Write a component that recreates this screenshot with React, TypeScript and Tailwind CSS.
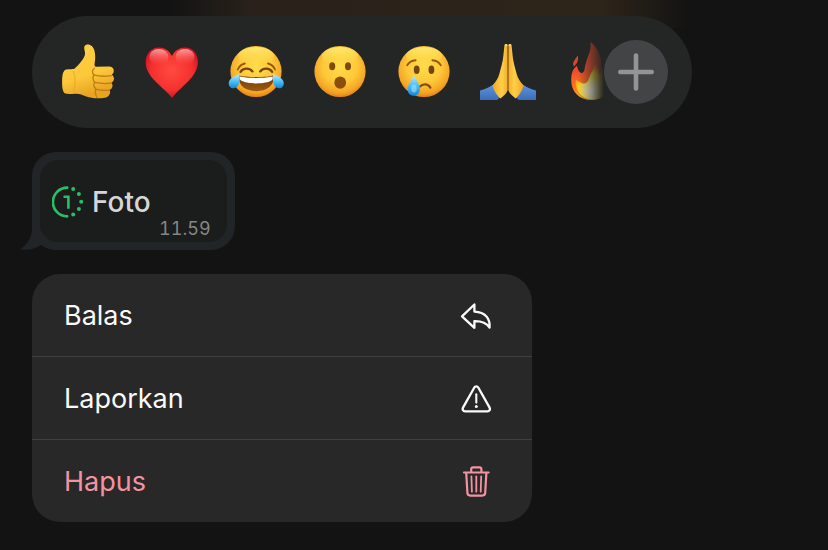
import type { ReactNode } from "react";

type IconProps = { className?: string };

// Gradients shared by every emoji, rendered once at the top of the page.
function EmojiDefs() {
  return (
    <svg className="absolute size-0" aria-hidden="true">
      <defs>
        <radialGradient id="face" cx="0.5" cy="0.4" r="0.61">
          <stop offset="0" stopColor="#ffdc4a" />
          <stop offset="0.55" stopColor="#fdc83a" />
          <stop offset="0.85" stopColor="#f6a423" />
          <stop offset="1" stopColor="#dc7d17" />
        </radialGradient>
        <linearGradient id="shine" x1="0" y1="0" x2="0" y2="1">
          <stop offset="0" stopColor="#fff27a" stopOpacity="0.8" />
          <stop offset="1" stopColor="#ffe04f" stopOpacity="0" />
        </linearGradient>
        <linearGradient id="thumb" x1="0" y1="0" x2="0.3" y2="1">
          <stop offset="0" stopColor="#ffd044" />
          <stop offset="0.65" stopColor="#fcc83a" />
          <stop offset="1" stopColor="#e8a322" />
        </linearGradient>
        <radialGradient id="heart" cx="0.5" cy="0.45" r="0.6">
          <stop offset="0" stopColor="#ff4b40" />
          <stop offset="0.65" stopColor="#f5302f" />
          <stop offset="1" stopColor="#c50d20" />
        </radialGradient>
        <linearGradient id="heartShine" x1="0" y1="0" x2="0" y2="1">
          <stop offset="0" stopColor="#ffc4c4" stopOpacity="0.8" />
          <stop offset="1" stopColor="#ff5a55" stopOpacity="0" />
        </linearGradient>
        <linearGradient id="tear" x1="0" y1="0" x2="0" y2="1">
          <stop offset="0" stopColor="#b9ecff" />
          <stop offset="0.5" stopColor="#4fc0f7" />
          <stop offset="1" stopColor="#1784d6" />
        </linearGradient>
        <linearGradient id="mouth" x1="0" y1="0" x2="0" y2="1">
          <stop offset="0" stopColor="#6b3a06" />
          <stop offset="1" stopColor="#9a5c10" />
        </linearGradient>
        <linearGradient id="palm" x1="0" y1="0" x2="1" y2="0">
          <stop offset="0" stopColor="#f5a61f" />
          <stop offset="0.6" stopColor="#ffcf48" />
          <stop offset="1" stopColor="#f0ac2c" />
        </linearGradient>
        <linearGradient id="sleeve" x1="0" y1="0" x2="0" y2="1">
          <stop offset="0" stopColor="#5b93dd" />
          <stop offset="1" stopColor="#3e6db8" />
        </linearGradient>
        <linearGradient id="flame" x1="0" y1="0" x2="0" y2="1">
          <stop offset="0" stopColor="#d8412c" />
          <stop offset="0.5" stopColor="#f04d2c" />
          <stop offset="0.8" stopColor="#fb7a1c" />
          <stop offset="1" stopColor="#ffb319" />
        </linearGradient>
        <radialGradient id="flameCore" cx="0.5" cy="0.8" r="0.65">
          <stop offset="0" stopColor="#ffffff" />
          <stop offset="0.3" stopColor="#fff3a0" />
          <stop offset="0.65" stopColor="#ffd21f" />
          <stop offset="1" stopColor="#ffb31a" stopOpacity="0" />
        </radialGradient>
      </defs>
    </svg>
  );
}

function Emoji({ children }: { children: ReactNode }) {
  return (
    <svg viewBox="0 0 56 56" className="size-14 overflow-visible" aria-hidden="true">
      {children}
    </svg>
  );
}

function Face() {
  return (
    <>
      <circle cx="28" cy="27.5" r="25.6" fill="url(#face)" />
      <ellipse cx="28" cy="12" rx="18" ry="9" fill="url(#shine)" />
    </>
  );
}

function ThumbsUp() {
  return (
    <Emoji>
      <path
        d="M25.800.9c3.600-1.400 7.400 1 8.600 5.700 1.200 4.700.9 9.500.2 13.200-.3 1.600.1 2.800 1.400 2.900l12.800-.1c3.300 0 5 1.900 5 4.200 0 2-.9 3.300-2 4 1.300.8 2.200 2.200 2.200 4 0 1.900-1.200 3.200-2.700 3.900.9.800 1.300 2 1.200 3.400-.1 2-1.300 3.300-2.900 3.800.5.800.7 1.700.5 2.900-.4 2.700-2.300 4.600-5.300 5-5.500.9-13.500.8-18.500-1.200-4.200-1.700-6.500-3.100-11-2.900-4.500.2-8 .5-10-.2C2.700 48.500 2 43.500 2.100 37.800c0-5 .4-9.300 2.300-11.300 1.500-1.500 6-1.100 9.600-1.400 2.600-2.300 5.500-5.200 8.300-9.100 1.900-2.800 3.200-5.100 2.600-8.300-.6-2.700-1.400-5.800.9-6.800Z"
        fill="url(#thumb)"
      />
      <path
        d="M34.500 24.200c-2.400 1.300-2.900 4.600-.4 6.700-1.700 1.900-1.500 5.500.6 7.200-1.500 2.100-1 5.200 1.200 6.700-.9 2.500-.5 5.700 1 8.700M34.500 31.200c5 1.300 12 1.200 17.200.4M35 38.400c5 1.200 11 1.400 16.200.7M36.200 45.400c4.500 1 9 1.100 13.200.7"
        fill="none"
        stroke="#bd7d12"
        strokeWidth="1.300"
        strokeLinecap="round"
      />
      <path d="M13 27c2.500 4 2.800 15 .5 21" fill="none" stroke="#e2a324" strokeWidth="1.600" opacity="0.500" />
    </Emoji>
  );
}

function Heart() {
  return (
    <Emoji>
      <path
        d="M28 54C25.500 50 18 44 12 38 5 31 1.700 25 1.700 18.200 1.700 9.700 7.300 3.600 15 3.600c5.600 0 10 2.900 12.900 8.300C31 6.500 35.200 3.600 41 3.600c7.500 0 12.900 6.100 12.900 14.400C53.900 25 50.500 31 43.500 38 37.500 44 30.500 50 28 54Z"
        fill="url(#heart)"
      />
      <ellipse cx="14.800" cy="13" rx="9.500" ry="8" fill="url(#heartShine)" />
      <ellipse cx="41" cy="13" rx="9.500" ry="8" fill="url(#heartShine)" />
    </Emoji>
  );
}

function Joy() {
  return (
    <Emoji>
      <Face />
      <path
        d="M9.800 25.500c1.200-3 3.600-5.200 7-6M47 25.500c-1.200-3-3.600-5.200-7-6"
        fill="none"
        stroke="#99590c"
        strokeWidth="1.900"
        strokeLinecap="round"
      />
      <path
        d="M12.500 27.800c2.800-4 8.700-4.200 12-.4M44.200 27.800c-2.800-4-8.700-4.200-12-.4"
        fill="none"
        stroke="#7c4306"
        strokeWidth="2.300"
        strokeLinecap="round"
      />
      <path d="M11 31.500c5.500 2 29 2 34.500 0 1.500 9.500-6 15.700-17.200 15.700S9.500 41 11 31.500Z" fill="url(#mouth)" />
      <path d="M12 32.600c5.500 1.800 27 1.800 32.500 0 .6 1.400.3 2.900-.7 3.700-6 4.200-25 4.200-31.100 0-1-.8-1.300-2.300-.7-3.700Z" fill="#fff" />
      <path d="M11.200 30.300c1 3.500.8 7.200-.6 10.200-1.500 3.300-5.100 4.800-7.700 3.200-2.600-1.600-2.900-5.300-.7-8.100 2.100-2.600 5.500-4.300 9-5.300Z" fill="url(#tear)" />
      <path d="M45.300 30.300c-1 3.500-.8 7.200.6 10.200 1.500 3.300 5.100 4.800 7.700 3.200 2.600-1.600 2.900-5.300.7-8.100-2.100-2.600-5.500-4.300-9-5.300Z" fill="url(#tear)" />
    </Emoji>
  );
}

function Surprised() {
  return (
    <Emoji>
      <Face />
      <ellipse cx="20.200" cy="22.300" rx="3" ry="4" fill="#7c4a0a" />
      <ellipse cx="36" cy="22.300" rx="3" ry="4" fill="#7c4a0a" />
      <ellipse cx="28.200" cy="38.600" rx="5.900" ry="6.200" fill="#8a500b" />
    </Emoji>
  );
}

function Crying() {
  return (
    <Emoji>
      <Face />
      <path
        d="M11.200 21.300c1.700-2.800 4.700-4.700 8.400-5M44.800 21.300c-1.700-2.800-4.700-4.700-8.400-5"
        fill="none"
        stroke="#99590c"
        strokeWidth="1.900"
        strokeLinecap="round"
      />
      <ellipse cx="20.700" cy="25.700" rx="2.900" ry="4.200" fill="#75440b" />
      <ellipse cx="35.400" cy="25.700" rx="2.900" ry="4.200" fill="#75440b" />
      <path d="M24 42.500c3-3.300 8.200-2.900 10.400 1.200" fill="none" stroke="#854c0a" strokeWidth="2.200" strokeLinecap="round" />
      <path d="M18 31c1.500 4.500 6 9 6 14.200 0 3.800-2.700 6.500-6.200 6.500s-6.200-2.700-6.200-6.500c0-5 4.700-9.700 6.400-14.200Z" fill="url(#tear)" />
      <ellipse cx="18" cy="44.500" rx="2.700" ry="4" fill="#b9ecff" opacity="0.500" />
    </Emoji>
  );
}

function Praying() {
  const half = (
    <>
      <path d="M0 46.500c4.500-1.200 9-3 12.500-5.500l8.200 11.500c-1.200 1.500-2.400 2.700-3.700 3.500H0Z" fill="url(#sleeve)" />
      <path
        d="M24.400 1.500c.3-2 3.300-1.900 3.400.3l.2 41.700c0 3-1.500 5.500-3.600 7.600l-4 3.300c-3.500-3-6.300-7.300-8-12.900 3.500-4 5.600-7 6.900-11.500 1.500-5.500 3.700-13 4.100-18.500Z"
        fill="url(#palm)"
      />
    </>
  );
  return (
    <Emoji>
      {half}
      <g transform="translate(56 0) scale(-1 1)">{half}</g>
      <path d="M28 2v43" stroke="#8f540c" strokeWidth="1.200" />
      <path d="M25.300 1.500c.3-.8 1.400-.8 1.700 0M29 1.500c.3-.8 1.400-.8 1.700 0" fill="none" stroke="#ffe9b0" strokeWidth="1.100" />
    </Emoji>
  );
}

function Fire() {
  return (
    <Emoji>
      <path
        d="M26.500-2c.8 6-.7 10-2.500 14.500-1.600 4-2.700 8-3.500 13-.5 3-2.700 4.500-4.500 2.800-2-2-2.500-4-3-6.500C8.500 25 7.200 30 7.200 36.200 7.200 48 15.500 56 27.500 56S48.500 48 48.500 36c0-7-4-12-7-16-1.500 2-2.500 3-4 4C38 14 34.500 4 26.500-2Z"
        fill="url(#flame)"
      />
      <path d="M13.700 11.500c1.200 4-.2 8-3.700 11-2.600-3.500 1-6.800 3.700-11Z" fill="#d6452d" />
      <path
        d="M29.500 13c3.500 9-2.500 15-4.500 21.500-.7 2.400-2.300 4.800-4.600 5-3.500.3-5.300-2.800-8.700-3.500-1.500 8 5 19.500 16.500 19.500 10 0 16-7.500 16-16 0-7-4-10-6-13-1 2-2 3-3 3.500C34.500 23 32.500 17 29.500 13Z"
        fill="url(#flameCore)"
      />
    </Emoji>
  );
}

function PlusIcon() {
  return (
    <svg viewBox="0 0 36 38" className="h-[38px] w-9" fill="none" stroke="#949496" strokeWidth="4.600" strokeLinecap="round" aria-hidden="true">
      <path d="M18 2.500v33M2.300 19h31.400" />
    </svg>
  );
}

function ViewOnceIcon() {
  return (
    <svg viewBox="0 0 32 32" className="size-8 text-[#28bf69]" fill="none" stroke="currentColor" strokeLinecap="round" aria-hidden="true">
      <path d="M15.200 1.700a14.300 14.300 0 0 0 0 28.600" strokeWidth="2.700" />
      <path d="M11.500 10.800h4.900v12" strokeWidth="2.600" strokeLinecap="butt" />
      <g fill="currentColor" stroke="none">
        <circle cx="21.200" cy="3" r="2" />
        <circle cx="26.900" cy="8" r="2" />
        <circle cx="29.200" cy="15.700" r="2" />
        <circle cx="26.900" cy="23" r="2" />
        <circle cx="21.200" cy="28.400" r="2" />
      </g>
    </svg>
  );
}

function ReplyIcon({ className }: IconProps) {
  return (
    <svg viewBox="0 0 32 32" className={className} fill="none" stroke="currentColor" strokeWidth="2.300" strokeLinejoin="round" aria-hidden="true">
      <path d="M14.400 4.500 2 16.400l12.400 11.400v-6.700c7-.2 11.500 1 15.200 6.400C30.200 19 25.800 12 14.400 11.600Z" />
    </svg>
  );
}

function WarningIcon({ className }: IconProps) {
  return (
    <svg viewBox="0 0 32 32" className={className} fill="none" stroke="currentColor" strokeWidth="2.300" strokeLinecap="round" strokeLinejoin="round" aria-hidden="true">
      <path d="M14.200 4.700 3 24.600c-1 1.900.1 3.700 2.200 3.700h22.200c2.100 0 3.200-1.800 2.200-3.700L18.400 4.700c-1-1.700-3.200-1.700-4.200 0Z" />
      <path d="M16.300 11.300v8.300" strokeWidth="2.100" />
      <circle cx="16.300" cy="23.500" r="1.500" fill="currentColor" stroke="none" />
    </svg>
  );
}

function TrashIcon({ className }: IconProps) {
  return (
    <svg viewBox="0 0 32 32" className={className} fill="none" stroke="currentColor" strokeWidth="2.200" strokeLinecap="round" strokeLinejoin="round" aria-hidden="true">
      <path d="M4 6.500h24.600M11.200 6.500V3.300c0-1.200.7-1.900 1.900-1.900h6.400c1.200 0 1.900.7 1.900 1.900v3.200M6.200 6.500l1.200 20.300c.1 1.800 1.200 2.800 2.900 2.800h12c1.700 0 2.800-1 2.900-2.800l1.200-20.300" />
      <path d="m11.400 10.300.5 15.400M16.300 10.300v15.400M21.200 10.300l-.5 15.400" strokeWidth="1.800" />
    </svg>
  );
}

const reactions = [
  { label: "Suka", Icon: ThumbsUp },
  { label: "Hati", Icon: Heart },
  { label: "Tertawa", Icon: Joy },
  { label: "Terkejut", Icon: Surprised },
  { label: "Sedih", Icon: Crying },
  { label: "Terima kasih", Icon: Praying },
  { label: "Api", Icon: Fire },
];

const actions = [
  { label: "Balas", Icon: ReplyIcon, danger: false },
  { label: "Laporkan", Icon: WarningIcon, danger: false },
  { label: "Hapus", Icon: TrashIcon, danger: true },
];

function ReactionBar() {
  return (
    <div className="flex w-full max-w-[660px] items-center rounded-full bg-[#242625] py-6 pr-6 pl-7">
      {/* The row keeps going under the plus button, so its end fades out */}
      <div className="flex min-w-0 flex-1 gap-7 overflow-hidden py-1 [mask-image:linear-gradient(to_right,black_calc(100%-26px),transparent)]">
        {reactions.map(({ label, Icon }) => (
          <button key={label} type="button" aria-label={label} className="shrink-0">
            <Icon />
          </button>
        ))}
      </div>
      <button
        type="button"
        aria-label="Reaksi lainnya"
        className="flex size-16 shrink-0 items-center justify-center rounded-full bg-[#434446]"
      >
        <PlusIcon />
      </button>
    </div>
  );
}

function MessageBubble() {
  return (
    <div className="relative rounded-3xl bg-[#212527] p-2">
      <svg viewBox="0 0 32 36" className="absolute bottom-0 -left-3 h-9 w-8" fill="#212527" aria-hidden="true">
        <path d="M12 0v14c0 9-4 16-12 21.500 8 .6 15-.5 20-4L30 28Z" />
      </svg>
      <div className="relative rounded-[18px] bg-[#1b1d1c] pt-[26px] pr-4 pb-[2px] pl-3">
        <div className="flex items-center gap-2 pr-15">
          <ViewOnceIcon />
          <span className="text-[28px] leading-8 font-medium text-[#d6d6d6]">Foto</span>
        </div>
        <time className="block text-right text-lg leading-[22px] text-[#858686] tabular-nums">11.59</time>
      </div>
    </div>
  );
}

function ActionMenu() {
  return (
    <ul className="w-full max-w-[500px] divide-y divide-[#404040] overflow-hidden rounded-[28px] bg-[#282828]">
      {actions.map(({ label, Icon, danger }) => (
        <li key={label}>
          <button
            type="button"
            className={`flex w-full items-center justify-between pt-[26px] pr-10 pb-6 pl-8 text-[27px] leading-8 ${
              danger ? "text-[#f393a1]" : "text-[#fafafa]"
            }`}
          >
            {label}
            <Icon className="size-8" />
          </button>
        </li>
      ))}
    </ul>
  );
}

export default function App() {
  return (
    <main className="flex min-h-screen flex-col items-start gap-6 bg-[#131313] bg-[linear-gradient(to_right,transparent_170px,#29211a_250px,#2e251a_600px,transparent_690px)] bg-[length:100%_28px] bg-no-repeat px-8 pt-4 pb-7 font-['Inter',sans-serif]">
      <EmojiDefs />
      <ReactionBar />
      <MessageBubble />
      <ActionMenu />
    </main>
  );
}
